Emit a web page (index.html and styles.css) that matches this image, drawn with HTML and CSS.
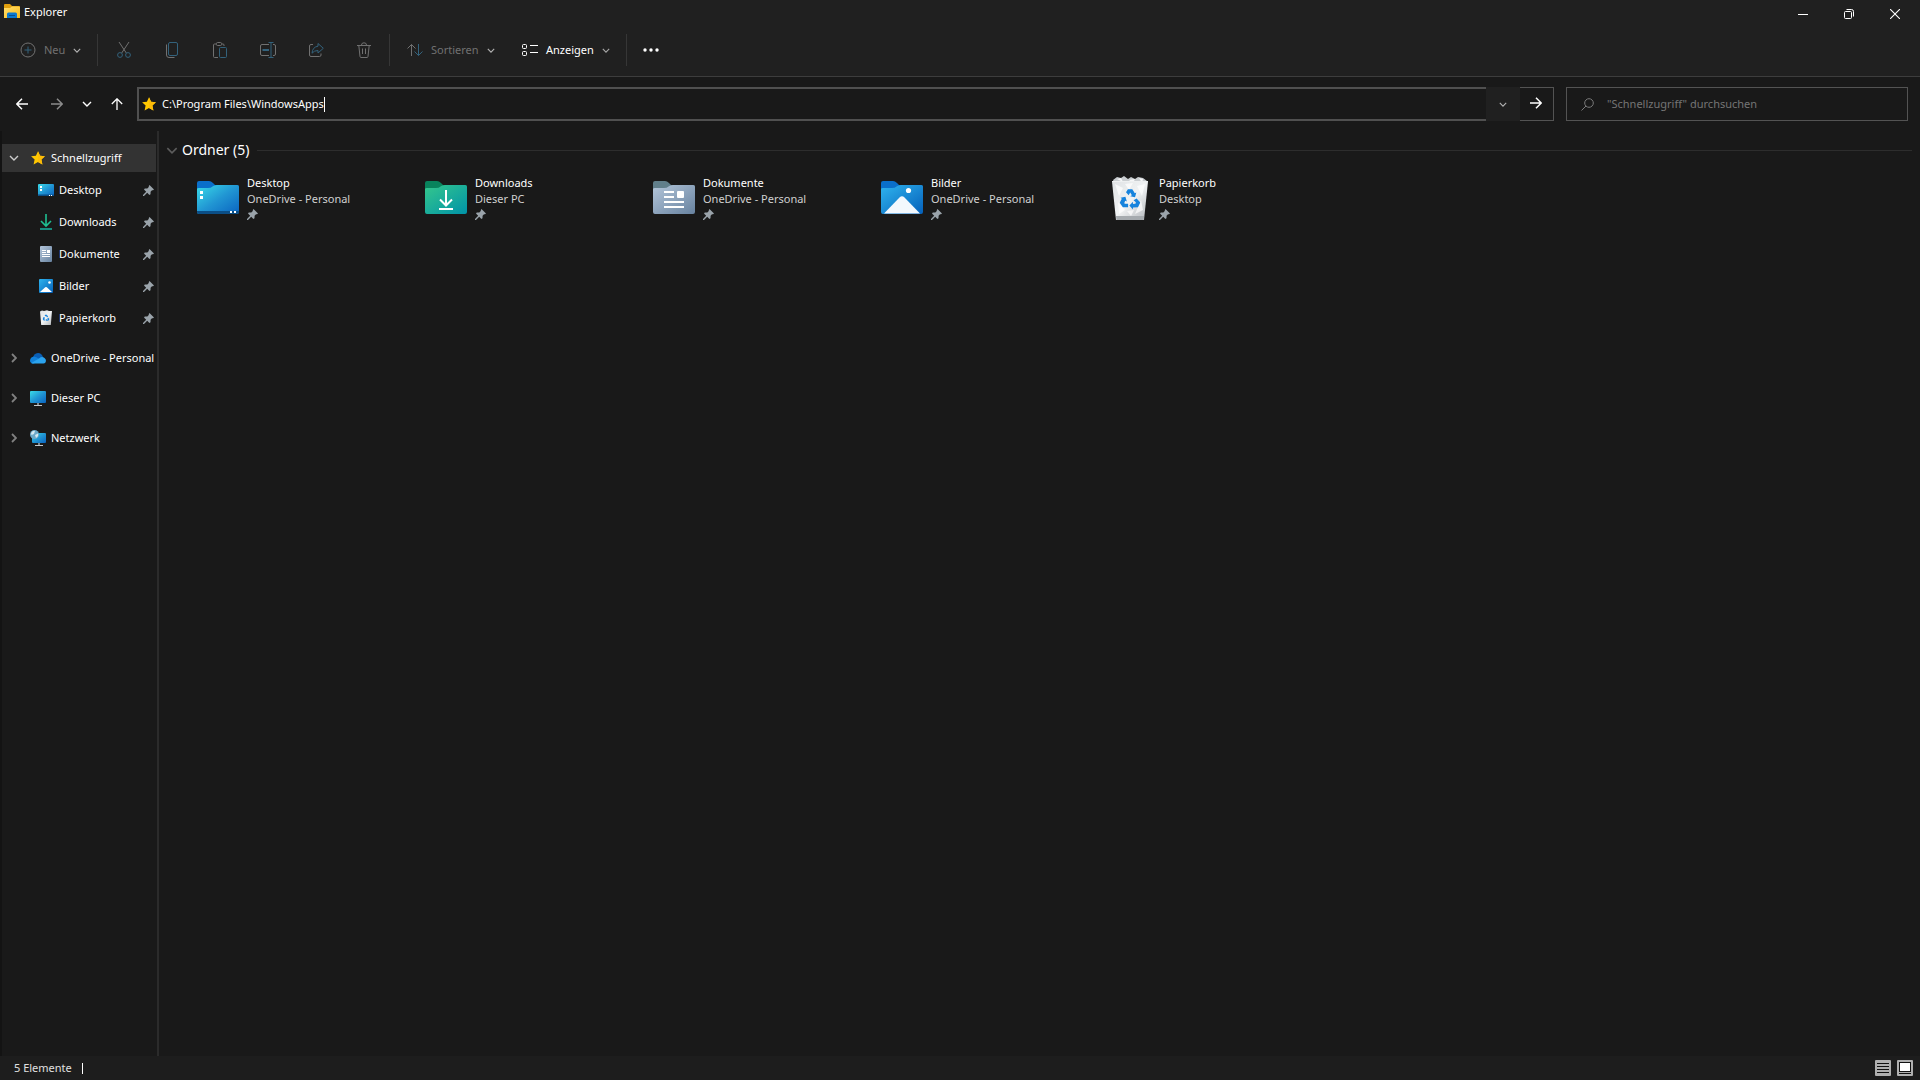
FILE: index.html
```html
<!DOCTYPE html>
<html lang="de">
<head>
<meta charset="utf-8">
<title>Explorer</title>
<link rel="stylesheet" href="styles.css">
</head>
<body>
<svg class="sprite" width="0" height="0" aria-hidden="true">
  <defs>
    <linearGradient id="cyan" x1="0" y1="0" x2="1" y2="1"><stop offset="0" stop-color="#3adbe8"/><stop offset="0.5" stop-color="#2196d3"/><stop offset="1" stop-color="#0a63c0"/></linearGradient>
    <linearGradient id="green" x1="0" y1="0" x2="1" y2="1"><stop offset="0" stop-color="#35c78c"/><stop offset="1" stop-color="#0093a8"/></linearGradient>
    <linearGradient id="steel" x1="0" y1="0" x2="1" y2="1"><stop offset="0" stop-color="#b4c6da"/><stop offset="1" stop-color="#67829f"/></linearGradient>
    <linearGradient id="blue" x1="0" y1="0" x2="1" y2="1"><stop offset="0" stop-color="#2fb4ee"/><stop offset="1" stop-color="#0560ba"/></linearGradient>
    <linearGradient id="gold" x1="0" y1="0" x2="1" y2="1"><stop offset="0" stop-color="#ffe070"/><stop offset="1" stop-color="#fbb917"/></linearGradient>
    <linearGradient id="bin" x1="0" y1="0" x2="1" y2="1"><stop offset="0" stop-color="#dfe2e4"/><stop offset="0.5" stop-color="#f1f3f4"/><stop offset="1" stop-color="#b3b7bb"/></linearGradient>
  </defs>
  <symbol id="pin" viewBox="0 0 11 11"><path d="M6.5 0 11 4.500 10 5.200 9 5.200 7.600 6.800 7.500 9.200 6.400 10 4.200 7.800 1 11 0 11 0 10 3.200 6.800 1 4.600 1.800 3.500 4.300 3.400 5.800 2 5.800 1Z" fill="#9aa3aa"/></symbol>
  <symbol id="down" viewBox="0 0 10 6"><path d="M1 1 5 5 9 1" fill="none" stroke="currentColor" stroke-width="1.400"/></symbol>
  <symbol id="right" viewBox="0 0 6 10"><path d="M1 1 5 5 1 9" fill="none" stroke="currentColor" stroke-width="1.800"/></symbol>
  <symbol id="arrow" viewBox="0 0 12 12"><path d="M0 6H11.2M6 .8 11.2 6 6 11.2" fill="none" stroke="currentColor" stroke-width="1.500"/></symbol>
  <symbol id="star" viewBox="0 0 14 14"><path d="M7 .2 9.1 4.7 13.9 5.3 10.4 8.6 11.4 13.6 7 11.1 2.6 13.6 3.6 8.6 .1 5.3 4.9 4.7Z" fill="#ffc800"/><path d="M7 .2 9.1 4.7 13.9 5.3 10.4 8.6 11.4 13.6 7 11.1Z" fill="#fdbc08"/></symbol>
  <symbol id="recycle" viewBox="0 0 20 20"><g fill="#1683dd"><path d="M6.2 3.2 8 .3h4.2L14.600 4l1.400-.6-1.200 4.500-4.600-1 1.600-.9L10.200 3.400 8.700 6Z"/><path d="M16.300 9 19.800 12.800 17.600 17.300 12.800 17.600V19.600L9.400 15.700 12.800 12.200V14.200L15.200 14 15.600 12.700 13.400 10.600Z"/><path d="M1 8.400 5.600 7.300 7 11.800 5.400 11.100 4.600 13.400 5 14H8.200V17.400H3.200L.2 13 2.200 9.400Z"/></g></symbol>
</svg>

<header class="chrome">
  <div class="titlebar">
    <svg class="app-icon" width="16" height="14" viewBox="0 0 16 14"><path d="M0 1Q0 0 1 0H6L8 2H15Q16 2 16 3V6H0Z" fill="#e09f0e"/><path d="M0 4H6L8 2.500H15Q16 2.500 16 3.500V14H0Z" fill="url(#gold)"/><path d="M3 14V10Q3 8.500 4.500 8.500H11.500Q13 8.500 13 10V14Z" fill="#0b78cf"/><path d="M5 11.500H11" stroke="#064f93"/></svg>
    <h1 class="title">Explorer</h1>
    <div class="window-controls">
      <button class="win-btn" aria-label="Minimieren"><svg width="10" height="10"><path d="M0 5.500H10" stroke="#fff"/></svg></button>
      <button class="win-btn" aria-label="Verkleinern"><svg width="10" height="10" fill="none" stroke="#fff"><rect x=".5" y="2.500" width="7" height="7" rx="1"/><path d="M2.500 .5H7.500Q9.500 .5 9.500 2.500V7.500"/></svg></button>
      <button class="win-btn" aria-label="Schließen"><svg width="10" height="10"><path d="M0 0 10 10M10 0 0 10" stroke="#fff" stroke-width="1.100"/></svg></button>
    </div>
  </div>
  <div class="toolbar">
    <button class="tool tool-new muted"><svg width="16" height="16" fill="none"><circle cx="8" cy="8" r="7" stroke="#717171"/><path d="M8 4.500V11.500M4.500 8H11.500" stroke="#33627c"/></svg><span>Neu</span><svg class="caret-down bright" width="8" height="5"><use href="#down"/></svg></button>
    <span class="sep"></span>
    <button class="tool icon-only" aria-label="Ausschneiden"><svg width="16" height="16" fill="none"><path d="M3 0 10.300 11M13 0 5.700 11" stroke="#717171"/><circle cx="4" cy="13" r="2.400" stroke="#33627c"/><circle cx="12" cy="13" r="2.400" stroke="#33627c"/></svg></button>
    <button class="tool icon-only" aria-label="Kopieren"><svg width="16" height="16" fill="none"><path d="M2.500 2.500V13Q2.500 15.500 5 15.500H10.500" stroke="#717171"/><rect x="4.500" y=".5" width="9" height="13" rx="1.500" stroke="#33627c"/></svg></button>
    <button class="tool icon-only" aria-label="Einfügen"><svg width="16" height="16" fill="none"><path d="M4 2H2.500Q1.500 2 1.500 3V14.500Q1.500 15.500 2.500 15.500H6M10 2H11Q12 2 12 3V4" stroke="#717171"/><rect x="4.500" y=".5" width="5" height="3" rx="1" stroke="#717171"/><rect x="7.500" y="5.500" width="7" height="10" rx="1" stroke="#33627c"/></svg></button>
    <button class="tool icon-only" aria-label="Umbenennen"><svg width="16" height="16" fill="none"><path d="M9 2.500H2Q.5 2.500 .5 4V12Q.5 13.500 2 13.500H9M13 2.500H14Q15.500 2.500 15.500 4V12Q15.500 13.500 14 13.500H13" stroke="#717171"/><path d="M2.500 8H9" stroke="#33627c" stroke-width="2"/><path d="M8.500 .5H13.500M8.500 15.500H13.500M11 .5V15.500" stroke="#33627c"/></svg></button>
    <button class="tool icon-only" aria-label="Freigeben"><svg width="16" height="16" fill="none"><path d="M5 2.500H3Q1.500 2.500 1.500 4V13Q1.500 14.500 3 14.500H11.500Q13 14.500 13 13V11.500" stroke="#717171"/><path d="M10 1.500 15.300 6.300 10 11V8.500Q6 8.500 4 11.200 4.500 5 10 4.200Z" stroke="#33627c"/></svg></button>
    <button class="tool icon-only" aria-label="Löschen"><svg width="16" height="16" fill="none" stroke="#717171"><path d="M1 3.500H15M5.500 3Q5.500 .8 8 .8T10.500 3M2.800 3.500 4 14.500Q4.200 15.500 5 15.500H11Q11.800 15.500 12 14.500L13.200 3.500M6.500 6.500V12M9.500 6.500V12"/></svg></button>
    <span class="sep"></span>
    <button class="tool tool-sort muted"><svg width="16" height="16" fill="none"><path d="M4.500 14V2.500M.5 6.500 4.500 2.500 8.500 6.500" stroke="#717171"/><path d="M11.500 2V13.500M7.500 9.500 11.500 13.500 15.500 9.500" stroke="#33627c"/></svg><span>Sortieren</span><svg class="caret-down bright" width="8" height="5"><use href="#down"/></svg></button>
    <button class="tool tool-view"><svg width="16" height="16" fill="none" stroke="#fff"><rect x=".5" y="2.500" width="4" height="4" rx="1"/><rect x=".5" y="9.500" width="4" height="4" rx="1"/><path d="M8 3.500H16M8 10.500H16"/></svg><span>Anzeigen</span><svg class="caret-down" width="8" height="5"><use href="#down"/></svg></button>
    <span class="sep"></span>
    <button class="tool icon-only" aria-label="Mehr anzeigen"><svg width="16" height="4" fill="#fff"><circle cx="2" cy="2" r="1.700"/><circle cx="8" cy="2" r="1.700"/><circle cx="14" cy="2" r="1.700"/></svg></button>
  </div>
</header>

<div class="navrow">
  <div class="nav-buttons">
    <button class="nav-btn" aria-label="Zurück"><svg width="12" height="12" viewBox="0 0 12 12"><path d="M12 6H.8M6 .8 .8 6 6 11.200" fill="none" stroke="#fff" stroke-width="1.500"/></svg></button>
    <button class="nav-btn dim" aria-label="Vorwärts"><svg width="12" height="12"><use href="#arrow"/></svg></button>
    <button class="nav-btn narrow" aria-label="Zuletzt besucht"><svg width="10" height="6"><use href="#down"/></svg></button>
    <button class="nav-btn" aria-label="Nach oben"><svg width="12" height="12" viewBox="0 0 12 12"><path d="M6 12V.8M.8 6 6 .8 11.200 6" fill="none" stroke="#fff" stroke-width="1.300"/></svg></button>
  </div>
  <div class="address">
    <div class="address-field">
      <svg width="14" height="14"><use href="#star"/></svg>
      <input class="path" type="text" aria-label="Adresse" value="C:\Program Files\WindowsApps">
      <span class="text-cursor"></span>
    </div>
    <button class="address-drop" aria-label="Vorherige Orte"><svg width="8" height="5"><use href="#down"/></svg></button>
    <button class="address-go" aria-label="Wechseln zu"><svg width="12" height="12"><use href="#arrow"/></svg></button>
  </div>
  <div class="search">
    <svg width="13" height="13" fill="none" stroke="#7a7a7a"><circle cx="8" cy="5" r="4.300"/><path d="M5 8 .5 12.500"/></svg>
    <input class="search-input" type="text" aria-label="Suchen" placeholder="&quot;Schnellzugriff&quot; durchsuchen">
  </div>
</div>

<div class="content">
  <nav class="sidebar">
    <a href="#" class="node selected"><svg class="twisty" width="10" height="6"><use href="#down"/></svg><svg class="ico" width="16" height="16" viewBox="-1 -1 16 16"><use href="#star" width="14" height="14"/></svg><span>Schnellzugriff</span></a>
    <a href="#" class="node child"><svg class="ico" width="16" height="16"><rect y="2" width="16" height="12" rx="1" fill="url(#cyan)"/><path d="M0 12.500H16V13Q16 14 15 14H1Q0 14 0 13Z" fill="#0b4e86"/><path d="M2 4h2v2H2ZM2 7h2v2H2ZM11 13h1v1h-1ZM13 13h1v1h-1Z" fill="#fff"/></svg><span>Desktop</span><svg class="pin" width="11" height="11"><use href="#pin"/></svg></a>
    <a href="#" class="node child"><svg class="ico" width="16" height="16" fill="none" stroke="#1fbf92" stroke-width="1.600"><path d="M8 0V11.500M3 7 8 12 13 7"/><path d="M2 15H14" stroke="#18a999"/></svg><span>Downloads</span><svg class="pin" width="11" height="11"><use href="#pin"/></svg></a>
    <a href="#" class="node child"><svg class="ico" width="16" height="16"><rect x="2" width="12" height="16" rx="1" fill="url(#steel)"/><path d="M4 4.500H8M4 6.500H8M4 8.500H12M4 10.500H12" stroke="#fff"/><path d="M9 4h3v3H9Z" fill="#fff"/></svg><span>Dokumente</span><svg class="pin" width="11" height="11"><use href="#pin"/></svg></a>
    <a href="#" class="node child"><svg class="ico" width="16" height="16"><rect x="1" y="1" width="14" height="14" rx="1" fill="url(#blue)"/><path d="M2 14 7.200 9.300Q8 8.500 8.800 9.300L14 14Z" fill="#fff"/><circle cx="11.500" cy="4.500" r="1.300" fill="#fff"/></svg><span>Bilder</span><svg class="pin" width="11" height="11"><use href="#pin"/></svg></a>
    <a href="#" class="node child"><svg class="ico" width="16" height="16"><path d="M2 1.500 4 .5 6 1 9 .3 11 1 14 1 12.800 15H3.200Z" fill="url(#bin)"/><use href="#recycle" x="4.500" y="4.500" width="7" height="7"/></svg><span>Papierkorb</span><svg class="pin" width="11" height="11"><use href="#pin"/></svg></a>
    <a href="#" class="node root"><svg class="twisty" width="6" height="10"><use href="#right"/></svg><svg class="ico" width="16" height="16"><path d="M3 8Q3.500 3.500 8 3 11.500 3 13 7L9 10Z" fill="#0a5fb5"/><path d="M0 10.500Q.3 7 4 6.500 6 6.500 9.500 9L4 13.500H3Q0 13 0 10.500Z" fill="#1181da"/><path d="M9 8.500Q12 6 14.500 8 16 9 16 11Q15.500 13.500 13.500 13.500H3Q2 13.500 1.300 13Z" fill="#2ba3ee"/></svg><span>OneDrive - Personal</span></a>
    <a href="#" class="node root"><svg class="twisty" width="6" height="10"><use href="#right"/></svg><svg class="ico" width="16" height="16"><rect y="1" width="16" height="12" rx="1" fill="url(#cyan)"/><path d="M7 13h2v2H7Z" fill="#7e868c"/><path d="M4 15.500H12" stroke="#c5c9cc"/></svg><span>Dieser PC</span></a>
    <a href="#" class="node root"><svg class="twisty" width="6" height="10"><use href="#right"/></svg><svg class="ico" width="16" height="16"><rect x="2" y="3" width="14" height="10" rx="1" fill="url(#cyan)"/><path d="M8 13h2v2H8Z" fill="#7e868c"/><path d="M5 15.500H13" stroke="#c5c9cc"/><circle cx="4.500" cy="4.500" r="4.500" fill="#6ba9c9"/><path d="M1 3Q3 0 5 1L4 4 1.500 5ZM5 5 8 3.500Q9 6 6 8Z" fill="#d5e9f1"/></svg><span>Netzwerk</span></a>
  </nav>

  <main class="files">
    <h2 class="group"><svg width="12" height="7"><use href="#down"/></svg><span>Ordner (5)</span></h2>
    <div class="grid">
      <a href="#" class="item"><svg class="thumb" width="42" height="46" viewBox="0 0 42 46"><path d="M0 9Q0 7 2 7H12Q14 7 16 9L18 11H40Q42 11 42 13V20H0Z" fill="#0a6fca"/><path d="M0 15Q0 14 2 14H11Q14 14 15.500 12.500T20 11H40Q42 11 42 13V38Q42 40 40 40H2Q0 40 0 38Z" fill="url(#cyan)"/><path d="M0 37H42V38Q42 40 40 40H2Q0 40 0 38Z" fill="#0b4e86"/><path d="M3 17h3v3H3ZM3 22h3v3H3ZM33 37h2v2h-2ZM37 37h2v2h-2Z" fill="#fff"/></svg><span class="meta"><span class="name">Desktop</span><span class="place">OneDrive - Personal</span><svg class="pin-small" width="11" height="11"><use href="#pin"/></svg></span></a>
      <a href="#" class="item"><svg class="thumb" width="42" height="46" viewBox="0 0 42 46"><path d="M0 9Q0 7 2 7H12Q14 7 16 9L18 11H40Q42 11 42 13V20H0Z" fill="#08835c"/><path d="M0 15Q0 14 2 14H11Q14 14 15.500 12.500T20 11H40Q42 11 42 13V38Q42 40 40 40H2Q0 40 0 38Z" fill="url(#green)"/><path d="M21 16V31M15 25.500 21 31.500 27 25.500M14 35H28" fill="none" stroke="#fff" stroke-width="2"/></svg><span class="meta"><span class="name">Downloads</span><span class="place">Dieser PC</span><svg class="pin-small" width="11" height="11"><use href="#pin"/></svg></span></a>
      <a href="#" class="item"><svg class="thumb" width="42" height="46" viewBox="0 0 42 46"><path d="M0 9Q0 7 2 7H12Q14 7 16 9L18 11H40Q42 11 42 13V20H0Z" fill="#617f8b"/><path d="M0 15Q0 14 2 14H11Q14 14 15.500 12.500T20 11H40Q42 11 42 13V38Q42 40 40 40H2Q0 40 0 38Z" fill="url(#steel)"/><path d="M11 18H21M11 23H21M11 28H31M11 33H31" stroke="#fff" stroke-width="2"/><rect x="24" y="17" width="7" height="7" rx="1" fill="#fff"/></svg><span class="meta"><span class="name">Dokumente</span><span class="place">OneDrive - Personal</span><svg class="pin-small" width="11" height="11"><use href="#pin"/></svg></span></a>
      <a href="#" class="item"><svg class="thumb" width="42" height="46" viewBox="0 0 42 46"><path d="M0 9Q0 7 2 7H12Q14 7 16 9L18 11H40Q42 11 42 13V20H0Z" fill="#0a6fca"/><path d="M0 15Q0 14 2 14H11Q14 14 15.500 12.500T20 11H40Q42 11 42 13V38Q42 40 40 40H2Q0 40 0 38Z" fill="url(#blue)"/><path d="M3 39.500 18.500 23.500Q21 21 23.500 23.500L39 39.500Z" fill="#f3f8fd"/><circle cx="27.500" cy="16.500" r="2.600" fill="#fff"/></svg><span class="meta"><span class="name">Bilder</span><span class="place">OneDrive - Personal</span><svg class="pin-small" width="11" height="11"><use href="#pin"/></svg></span></a>
      <a href="#" class="item"><svg class="thumb" width="42" height="46" viewBox="0 0 42 46"><path d="M4 6 8 3 12 4 15 2 19 5 22 3 26 5 29 3 34 4 38 7 36 13H6Z" fill="#c9cdd0"/><path d="M8 5 12 4 14 8ZM20 6 26 5 24 9ZM30 4 34 5 33 9Z" fill="#f6f7f8"/><path d="M3 7.500H39L35 46H7Z" fill="url(#bin)"/><path d="M6 10 14 14 10 22ZM16 10 24 9 20 16ZM28 12 36 10 33 22ZM9 28 16 36 10 40ZM32 26 34 36 26 40ZM18 37 25 36 22 42Z" fill="#fff" opacity=".7"/><path d="M7 42H35L34.600 46H7.400Z" fill="#a6abaf"/><path d="M3 7.500H39" stroke="#eef0f1"/><use href="#recycle" x="10.500" y="15" width="21" height="21"/></svg><span class="meta"><span class="name">Papierkorb</span><span class="place">Desktop</span><svg class="pin-small" width="11" height="11"><use href="#pin"/></svg></span></a>
    </div>
  </main>
</div>

<footer class="statusbar">
  <span class="count">5 Elemente</span>
  <div class="view-modes">
    <button class="mode" aria-label="Details"><svg width="16" height="16"><rect width="16" height="16" rx="1" fill="#b0b0b0"/><path d="M2 3.500H14M2 6.500H14M2 9.500H14M2 12.500H14" stroke="#111"/></svg></button>
    <button class="mode" aria-label="Große Symbole"><svg width="16" height="16"><rect width="16" height="16" rx="1" fill="#b0b0b0"/><rect x="2.500" y="2.500" width="11" height="9" fill="#fff" stroke="#111"/><path d="M2 13.500H14" stroke="#111"/></svg></button>
  </div>
</footer>
</body>
</html>
```
FILE: styles.css
```css
* { box-sizing: border-box; }

body {
  margin: 0;
  min-height: 100vh;
  display: flex;
  flex-direction: column;
  background: #191919;
  color: #fff;
  font: 11px/16px "Noto Sans", "Open Sans", sans-serif;
}

.sprite { position: absolute; }

h1, h2 { margin: 0; font: inherit; }

a { color: inherit; text-decoration: none; }

svg { display: block; flex: none; }

button {
  display: flex;
  align-items: center;
  justify-content: center;
  margin: 0;
  padding: 0;
  border: 0;
  background: none;
  color: #fff;
  font: inherit;
}

input {
  min-width: 0;
  margin: 0;
  padding: 0;
  border: 0;
  outline: 0;
  background: none;
  color: #fff;
  font: inherit;
}

/* Title bar and command bar */
.chrome { background: #202020; border-bottom: 1px solid #3d3d3d; }

.titlebar { display: flex; height: 24px; padding: 0 2px 0 4px; }
.app-icon { margin-top: 4px; }
.title { padding: 4px; }
.window-controls { display: flex; margin-left: auto; }
.win-btn { width: 46px; height: 28px; }

.toolbar { display: flex; align-items: center; height: 52px; padding-left: 8px; }
.tool { height: 32px; }
.icon-only { width: 48px; }
.tool-new, .tool-sort, .tool-view { justify-content: flex-start; gap: 8px; padding: 0 12px; }
.tool-new { width: 88px; }
.tool-sort { width: 115px; margin-left: 4px; }
.tool-view { width: 112px; }
.muted { color: #717171; }
.caret-down { color: #a8a8a8; }
.bright { color: #b4b4b4; }
.sep { width: 1px; height: 32px; margin: 0 1px; background: #363636; }
.tool-new + .sep { margin-right: 2px; }
.tool-view + .sep { margin: 0 0 0 4px; }

/* Navigation row */
.navrow { display: flex; align-items: center; height: 54px; padding: 0 12px 0 4px; }
.nav-buttons { display: flex; width: 133px; }
.nav-btn { width: 35px; height: 34px; }
.narrow { width: 25px; }
.dim { color: #8c8c8c; }

.address { display: flex; flex: 1; height: 34px; }
.address-field {
  display: flex;
  flex: 1;
  align-items: center;
  padding-left: 3px;
  border: solid #505050;
  border-width: 2px 0 2px 2px;
}
.path { field-sizing: content; margin-left: 6px; }
.text-cursor { width: 1px; height: 15px; background: #fff; }
.address-drop { width: 34px; background: #202020; color: #b4b4b4; }
.address-go { width: 34px; padding: 0 2px 2px 0; border: solid #535353; border-width: 1px 1px 1px 0; }

.search {
  display: flex;
  align-items: center;
  width: 342px;
  height: 34px;
  margin-left: 12px;
  padding: 0 14px;
  gap: 13px;
  border: 1px solid #535353;
}
.search-input { flex: 1; }
.search-input::placeholder { color: #757575; opacity: 1; }

/* Folder tree */
.content { display: flex; flex: 1; }
.sidebar {
  display: flex;
  flex-direction: column;
  flex: none;
  gap: 4px;
  width: 159px;
  padding: 13px 1px 0 0;
  border-left: 2px solid #131313;
  border-right: 2px solid #2b2b2b;
}
.node {
  display: grid;
  grid-template-columns: 24px 16px 1fr;
  align-items: center;
  height: 28px;
  padding-left: 4px;
  white-space: nowrap;
}
.node span { padding-left: 5px; }
.selected { background: #333; }
.child { grid-template-columns: 16px 1fr 11px; padding: 0 2px 0 36px; }
.root { margin-top: 8px; }
.twisty { justify-self: center; margin-right: 8px; color: #808080; }
.selected .twisty { color: #ccc; }

/* Folder view */
.files { flex: 1; padding: 8px 8px 0 7px; }
.group { display: flex; align-items: center; gap: 4px; height: 22px; font-size: 14px; line-height: 22px; }
.group svg { color: #5c5c5c; }
.group::after { content: ""; flex: 1; height: 1px; margin-left: 4px; background: #2d2d2d; }
.grid { display: grid; grid-template-columns: repeat(auto-fill, 228px); padding: 13px 0 0 31px; }
.item { display: flex; gap: 8px; height: 48px; }
.meta { display: flex; flex-direction: column; padding-top: 1px; }
.place { color: #d0d0d0; }
.pin-small { margin-top: 2px; }

/* Status bar */
.statusbar {
  display: flex;
  align-items: center;
  justify-content: space-between;
  height: 24px;
  padding: 0 7px 0 14px;
  background: #1d1d1d;
}
.count { display: flex; align-items: center; gap: 10px; color: #e0e0e0; }
.count::after { content: ""; width: 1px; height: 11px; background: #fff; }
.view-modes { display: flex; gap: 6px; }
```
